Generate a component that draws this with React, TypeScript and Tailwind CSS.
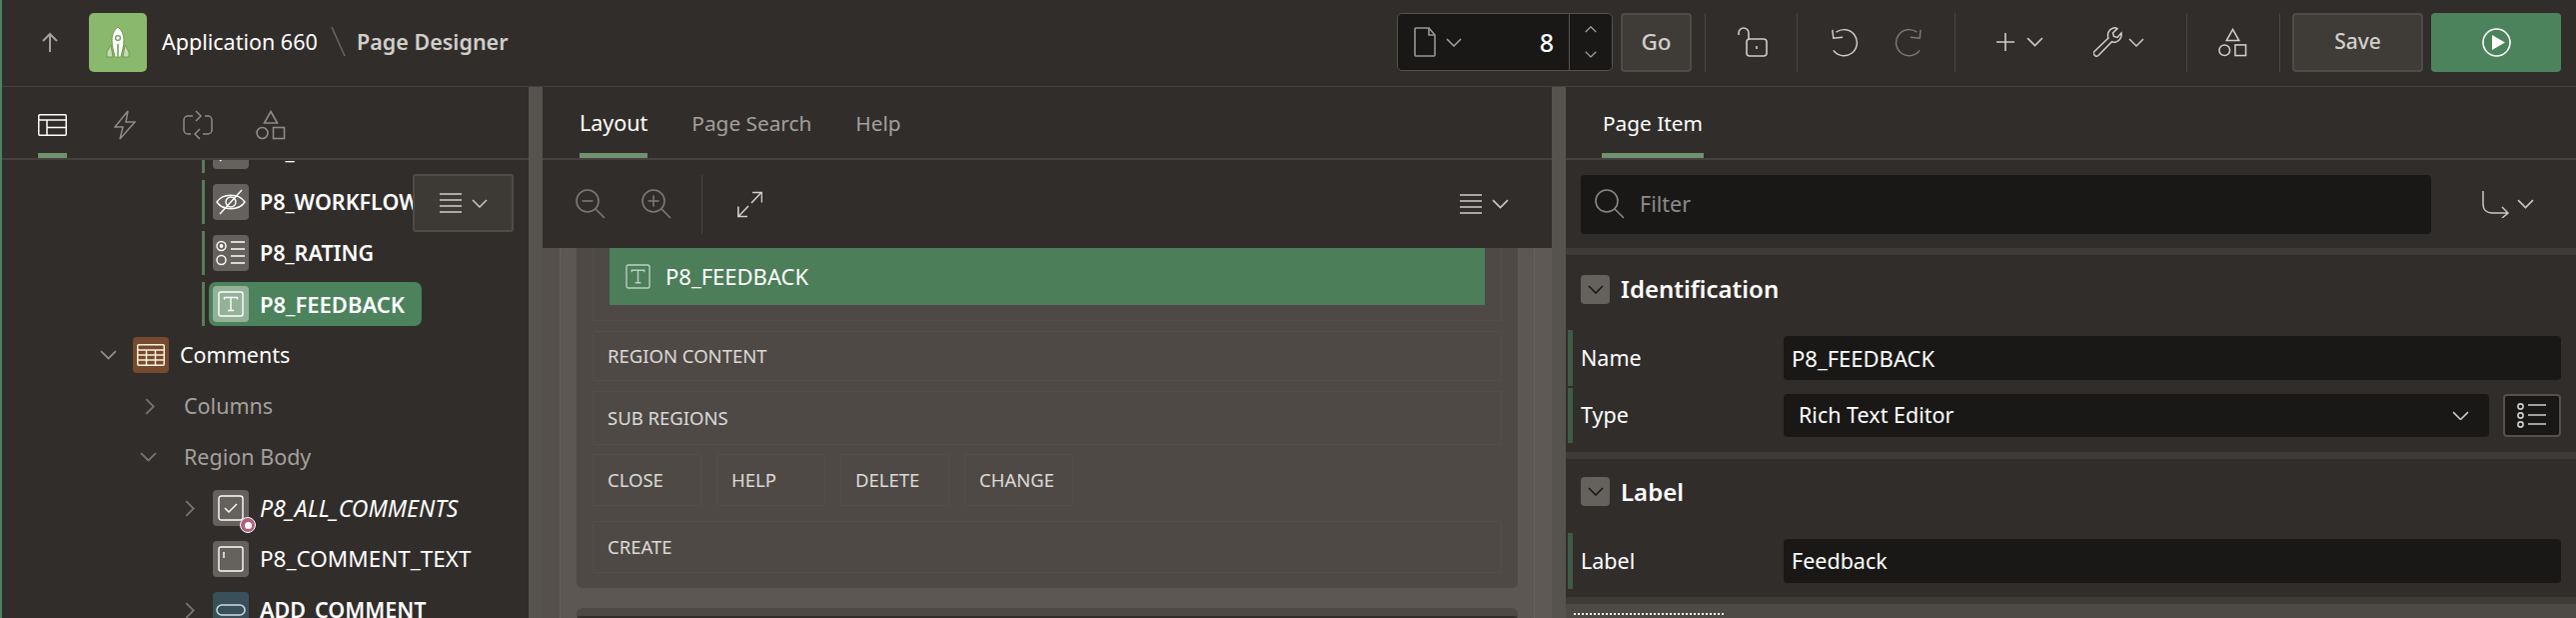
import React from "react";

const Chev = ({ w = 16, dir = "down", c = "#c9c7c5", sw = 1.5, className = "" }: { w?: number; dir?: string; c?: string; sw?: number; className?: string }) => {
  const paths: Record<string, string> = { down: "M1 1l7 7 7-7", up: "M1 8l7-7 7 7" };
  if (dir === "right")
    return (
      <svg width={w} height={w * 1.7} viewBox="0 0 9 16" fill="none" className={`shrink-0 ${className}`}>
        <path d="M1 1l7 7-7 7" stroke={c} strokeWidth={sw} />
      </svg>
    );
  return (
    <svg width={w} height={(w * 9) / 16} viewBox="0 0 16 9" fill="none" className={`shrink-0 ${className}`}>
      <path d={paths[dir]} stroke={c} strokeWidth={sw} />
    </svg>
  );
};

const Shapes = ({ s = 30, c = "#c4c2c0" }: { s?: number; c?: string }) => (
  <svg width={s} height={s} viewBox="0 0 30 30" fill="none" stroke={c} strokeWidth="1.6" className="shrink-0">
    <path d="M15 1.5l6.5 11.5h-13z" />
    <circle cx="6.5" cy="23" r="5.5" />
    <rect x="17.5" y="17.5" width="11" height="11" />
  </svg>
);

const Menu = () => (
  <svg width="22" height="20" viewBox="0 0 22 20" stroke="#d0cecc" strokeWidth="1.6" className="shrink-0">
    <path d="M0 1h22M0 7h22M0 13h22M0 19h22" />
  </svg>
);

const Mag = ({ mode, c = "#7d7975" }: { mode: "minus" | "plus" | "none"; c?: string }) => (
  <svg width="30" height="30" viewBox="0 0 30 30" fill="none" stroke={c} strokeWidth="1.6" className="shrink-0">
    <circle cx="12" cy="12" r="11" />
    <path d="M20 20l9 9" />
    {mode !== "none" && <path d="M6.5 12h11" />}
    {mode === "plus" && <path d="M12 6.5v11" />}
  </svg>
);

const Vsep = ({ className = "" }: { className?: string }) => <div className={`h-[59px] w-px shrink-0 bg-[#4a4643] ${className}`} />;

const TIcon = ({ s = 26, c = "#ffffff" }: { s?: number; c?: string }) => (
  <svg width={s} height={s} viewBox="0 0 26 26" fill="none" stroke={c} strokeWidth="1.4" className="shrink-0">
    <rect x="1" y="1" width="24" height="24" rx="2" />
    <path d="M6.5 8.5V6.5h13v2M13 6.5v13M10 19.5h6" />
  </svg>
);

const IconBox = ({ bg = "bg-[#65615d]", children }: { bg?: string; children: React.ReactNode }) => (
  <div className={`relative flex h-[36px] w-[36px] shrink-0 items-center justify-center rounded-[4px] ${bg}`}>{children}</div>
);

const Bar = () => <div className="h-[44px] w-[3px] shrink-0 bg-[#5a7a5c]" />;

const ItemRow = ({ icon, text }: { icon: React.ReactNode; text: string }) => (
  <div className="flex h-[51px] items-center pl-[200px]">
    <Bar />
    <div className="ml-[8px] flex items-center">
      {icon}
      <span className="ml-[11px] whitespace-nowrap text-[21.5px] font-semibold text-white">{text}</span>
    </div>
  </div>
);

const DotBox = ({ className = "", children }: { className?: string; children: React.ReactNode }) => (
  <div className={`flex items-center rounded-[3px] border border-dotted border-[#5a5551] pl-[14px] text-[18.5px] text-[#dcdad8] ${className}`}>{children}</div>
);

const Field = ({ label, value }: { label: string; value: string }) => (
  <div className="flex h-[56px] items-center pl-[2px]">
    <div className="h-[56px] w-[5px] shrink-0 bg-[#3f5a47]" />
    <span className="ml-[8px] w-[203px] text-[21.5px] text-white">{label}</span>
    <div className="flex h-[44px] w-[778px] items-center rounded-[4px] bg-[#191816] pl-[8px] text-[21.5px] text-white">{value}</div>
  </div>
);

export default function App() {
  return (
    <div className="flex h-[618px] w-[2578px] flex-col overflow-hidden border-l-2 border-[#4c825c] bg-[#312d2a] font-['Noto_Sans','Open_Sans',sans-serif]">
      {/* Header */}
      <header className="flex h-[87px] shrink-0 items-center border-b border-[#45413e] pb-[2px]">
        <svg width="18" height="20" viewBox="0 0 18 20" fill="none" stroke="#a3a09d" strokeWidth="2" className="ml-[39px] shrink-0">
          <path d="M9 20V2M2 9l7-7 7 7" />
        </svg>
        <div className="ml-[30px] flex h-[59px] w-[58px] shrink-0 items-center justify-center rounded-[5px] bg-[#8ab86c]">
          <svg width="24" height="31" viewBox="0 0 24 31" className="mt-[1px]">
            <path d="M5 18L1 25v5h6zM19 18l4 7v5h-6z" fill="#c6dcb6" stroke="#6f9a55" strokeWidth="1" />
            <path d="M12 0c4 3 6 8 6 13 0 6-2 12-3 17H9C8 25 6 19 6 13 6 8 8 3 12 0z" fill="#ffffff" stroke="#6f9a55" strokeWidth="1" />
            <circle cx="12" cy="11" r="2.4" fill="#ffffff" stroke="#6f9a55" strokeWidth="1.3" />
            <path d="M12 17v13" stroke="#8ab86c" strokeWidth="2" />
          </svg>
        </div>
        <span className="ml-[15px] w-[155px] shrink-0 whitespace-nowrap text-[21.5px] text-white">Application 660</span>
        <svg width="15" height="30" viewBox="0 0 15 30" className="ml-[14px] shrink-0"><path d="M1 0l13 29" stroke="#6b6763" strokeWidth="1.5" /></svg>
        <span className="ml-[11px] w-[149px] shrink-0 whitespace-nowrap text-[21.5px] font-semibold text-[#d0cecc]">Page Designer</span>

        <div className="ml-[892px] flex h-[58px] w-[216px] shrink-0 items-center rounded-[5px] border border-[#55514d] bg-[#191816]">
          <svg width="22" height="30" viewBox="0 0 22 30" fill="none" stroke="#9a9794" strokeWidth="1.6" className="ml-[16px] shrink-0">
            <path d="M1 2a1 1 0 011-1h13l6 7v20a1 1 0 01-1 1H2a1 1 0 01-1-1z" />
            <path d="M15 1v7h6" />
          </svg>
          <Chev w={16} c="#a5a29f" className="ml-[10px]" />
          <span className="ml-auto mr-[15px] text-[25px] font-medium leading-none text-white">8</span>
          <div className="flex h-full w-[43px] shrink-0 flex-col items-center justify-between border-l border-[#55514d] py-[12px]">
            <Chev w={12} dir="up" c="#a5a29f" sw={1.6} />
            <Chev w={12} c="#a5a29f" sw={1.6} />
          </div>
        </div>
        <button className="ml-[8px] h-[59px] w-[71px] shrink-0 rounded-[4px] border-2 border-[#4f4c48] bg-[#3f3b37] text-[22.5px] font-medium text-[#d0cecc]">Go</button>
        <Vsep className="ml-[13px]" />
        <svg width="30" height="30" viewBox="0 0 30 30" fill="none" stroke="#d0cecc" strokeWidth="1.6" className="ml-[32px] shrink-0">
          <rect x="9" y="12" width="20" height="17" rx="3" />
          <path d="M1 8V6a5 5 0 0110 0v6" />
          <path d="M19 19v3" />
        </svg>
        <Vsep className="ml-[29px]" />
        <svg width="28" height="30" viewBox="0 0 30 30" fill="none" stroke="#d0cecc" strokeWidth="1.6" className="ml-[33px] shrink-0">
          <path d="M6 4.5A14 14 0 1 1 3 24" />
          <path d="M2 2l1 9 10-1" />
        </svg>
        <svg width="28" height="30" viewBox="0 0 30 30" fill="none" stroke="#7d7975" strokeWidth="1.6" className="ml-[36px] shrink-0">
          <path d="M24 4.5A14 14 0 1 0 27 24" />
          <path d="M28 2l-1 9-10-1" />
        </svg>
        <Vsep className="ml-[32px]" />
        <svg width="18" height="18" viewBox="0 0 18 18" stroke="#d0cecc" strokeWidth="1.6" className="ml-[41px] shrink-0"><path d="M9 0v18M0 9h18" /></svg>
        <Chev w={17} className="ml-[12px]" />
        <svg width="29" height="30" viewBox="0 0 29 30" fill="none" stroke="#d0cecc" strokeWidth="1.5" className="ml-[50px] shrink-0">
          <path d="M1.5 24L15 11c-1.500-4 .5-9 5-10 1.500-.3 3 0 4 .6L19.500 6l1 3.500 3.500 1 4-4.500c.6 4-1.500 8-5.500 9-1.500.3-3 .2-4-.3L5 28.500a2.600 2.600 0 01-3.500-4.500z" />
        </svg>
        <Chev w={16} className="ml-[6px]" />
        <Vsep className="ml-[42px]" />
        <div className="ml-[31px]"><Shapes s={29} c="#d0cecc" /></div>
        <Vsep className="ml-[32px]" />
        <button className="ml-[12px] h-[59px] w-[131px] shrink-0 rounded-[4px] border-2 border-[#4f4c48] bg-[#3f3b37] text-[21px] font-medium text-[#d0cecc]">Save</button>
        <button className="ml-[8px] flex h-[59px] w-[130px] shrink-0 items-center justify-center rounded-[4px] bg-[#4c825c]">
          <svg width="29" height="29" viewBox="0 0 29 29" fill="none">
            <circle cx="14.500" cy="14.500" r="13.500" stroke="#ffffff" strokeWidth="1.6" />
            <path d="M10 7l13 7.500-13 7.500z" fill="#ffffff" />
          </svg>
        </button>
      </header>

      <div className="flex min-h-0 flex-1">
        {/* Left panel */}
        <aside className="relative flex w-[527px] shrink-0 flex-col overflow-hidden">
          <div className="flex h-[73px] shrink-0 items-center border-b-2 border-[#45413e] pl-[36px]">
            <div className="relative flex h-[71px] items-center pt-[4px]">
              <svg width="29" height="22" viewBox="0 0 29 22" fill="none" stroke="#ffffff" strokeWidth="1.5" className="shrink-0">
                <rect x=".75" y=".75" width="27.500" height="20.500" rx="1" />
                <path d="M1 6h27M9 6v15M9 13.500h19" />
              </svg>
              <div className="absolute bottom-0 left-0 h-[5px] w-[29px] bg-[#6f926e]" />
            </div>
            <svg width="22" height="30" viewBox="0 0 22 30" fill="none" stroke="#8e8b88" strokeWidth="1.5" className="ml-[47px] mt-[4px] shrink-0">
              <path d="M14 1L1 17h8L6 29l15-17h-9z" />
            </svg>
            <svg width="30" height="30" viewBox="0 0 30 30" fill="none" stroke="#8e8b88" strokeWidth="1.5" className="ml-[47px] mt-[4px] shrink-0">
              <path d="M10 6H5a4 4 0 00-4 4v10a4 4 0 004 4h3M20 24h5a4 4 0 004-4V10a4 4 0 00-4-4h-3" />
              <path d="M13 1l5 5-5 5M17 19l-5 5 5 5" />
            </svg>
            <div className="ml-[43px] mt-[4px]"><Shapes s={30} c="#8e8b88" /></div>
          </div>
          <div className="relative min-h-0 flex-1 overflow-hidden">
            <div className="-mt-[34.5px]">
              <ItemRow text="P8_ID" icon={
                <IconBox><svg width="28" height="22" viewBox="0 0 28 22" fill="none" stroke="#fff" strokeWidth="1.4"><path d="M1 11c6-9 20-9 26 0-6 9-20 9-26 0zM3 21L25 1" /></svg></IconBox>
              } />
              <ItemRow text="P8_WORKFLOW_ID" icon={
                <IconBox><svg width="30" height="26" viewBox="0 0 30 26" fill="none" stroke="#fff" strokeWidth="1.400"><path d="M1 13c6-9 22-9 28 0-6 9-22 9-28 0z" /><circle cx="15" cy="13" r="5" /><path d="M4 25L26 1" /></svg></IconBox>
              } />
              <ItemRow text="P8_RATING" icon={
                <IconBox><svg width="30" height="26" viewBox="0 0 30 26" fill="none" stroke="#fff" strokeWidth="1.400"><circle cx="5.500" cy="6" r="4.500" /><circle cx="5.500" cy="6" r="1.200" fill="#fff" /><circle cx="5.500" cy="20" r="4.500" /><path d="M15 2h14M15 9h14M15 16h14M15 23h14" /></svg></IconBox>
              } />
              <div className="flex h-[51px] items-center pl-[200px]">
                <Bar />
                <div className="ml-[4px] flex h-[44px] w-[213px] items-center rounded-[7px] bg-[#4c825c] pl-[4px]">
                  <IconBox bg="bg-[#94b298]"><TIcon s={26} /></IconBox>
                  <span className="ml-[11px] whitespace-nowrap text-[22px] font-semibold text-white">P8_FEEDBACK</span>
                </div>
              </div>
              <div className="flex h-[51px] items-center pl-[98px]">
                <Chev w={17} c="#8e8b88" sw={1.7} />
                <div className="ml-[16px]">
                  <IconBox bg="bg-[#754a2e]">
                    <svg width="28" height="22" viewBox="0 0 28 22" fill="none" stroke="#fff1dc" strokeWidth="1.500"><rect x=".75" y=".75" width="26.500" height="20.500" rx="1" /><path d="M1 6h26M1 11h26M1 16h26M9.500 6v15M18.500 6v15" /></svg>
                  </IconBox>
                </div>
                <span className="ml-[11px] whitespace-nowrap text-[21.5px] text-white">Comments</span>
              </div>
              <div className="flex h-[51px] items-center pl-[143px]">
                <Chev w={10} dir="right" c="#77736f" sw={1.7} />
                <span className="ml-[29px] whitespace-nowrap text-[21.5px] text-[#a3a09d]">Columns</span>
              </div>
              <div className="flex h-[51px] items-center pl-[138px]">
                <Chev w={17} c="#77736f" sw={1.7} />
                <span className="ml-[27px] whitespace-nowrap text-[21.5px] text-[#a3a09d]">Region Body</span>
              </div>
              <div className="flex h-[51px] items-center pl-[183px]">
                <Chev w={10} dir="right" c="#77736f" sw={1.7} />
                <div className="relative ml-[18px]">
                  <IconBox>
                    <svg width="26" height="26" viewBox="0 0 26 26" fill="none" stroke="#fff" strokeWidth="1.400"><rect x="1" y="1" width="24" height="24" rx="2.500" /><path d="M7 13l4 4 8-8" /></svg>
                  </IconBox>
                  <div className="absolute -bottom-[7px] -right-[7px] flex h-[16px] w-[16px] items-center justify-center rounded-full border border-white bg-[#b0607f]">
                    <div className="h-[7px] w-[7px] rounded-full bg-white" />
                  </div>
                </div>
                <span className="ml-[11px] whitespace-nowrap text-[23px] italic text-white">P8_ALL_COMMENTS</span>
              </div>
              <div className="flex h-[51px] items-center pl-[211px]">
                <IconBox>
                  <svg width="26" height="26" viewBox="0 0 26 26" fill="none" stroke="#fff" strokeWidth="1.400"><rect x="1" y="1" width="24" height="24" rx="2" /><path d="M6 6v6" /></svg>
                </IconBox>
                <span className="ml-[11px] whitespace-nowrap text-[22.5px] text-white">P8_COMMENT_TEXT</span>
              </div>
              <div className="flex h-[51px] items-center pl-[183px]">
                <Chev w={10} dir="right" c="#77736f" sw={1.7} />
                <div className="ml-[18px]">
                  <IconBox bg="bg-[#38505a]">
                    <svg width="30" height="12" viewBox="0 0 30 12" fill="none" stroke="#cfdde2" strokeWidth="1.500"><rect x="1" y="1" width="28" height="10" rx="5" /></svg>
                  </IconBox>
                </div>
                <span className="ml-[11px] whitespace-nowrap text-[21.5px] font-semibold text-white">ADD_COMMENT</span>
              </div>
            </div>
            <div className="absolute left-[411px] top-[14px] flex h-[58px] w-[101px] items-center justify-center gap-[10px] rounded-[3px] border-2 border-[#4f4c48] bg-[#3d3935]">
              <Menu />
              <Chev w={16} />
            </div>
          </div>
        </aside>

        <div className="w-[14px] shrink-0 bg-[#56524e]" />

        {/* Center */}
        <main className="flex w-[1010px] shrink-0 flex-col">
          <div className="flex h-[73px] shrink-0 items-center border-b-2 border-[#45413e] pl-[37px]">
            <div className="relative flex h-[71px] items-center pt-[2px] text-[21.5px]">
              <span className="text-white">Layout</span>
              <div className="absolute bottom-0 left-0 h-[5px] w-full bg-[#6f926e]" />
            </div>
            <span className="ml-[44px] pt-[2px] text-[20.8px] text-[#a3a09d]">Page Search</span>
            <span className="ml-[44px] pt-[2px] text-[20.8px] text-[#a3a09d]">Help</span>
          </div>
          <div className="flex h-[88px] shrink-0 items-center pl-[33px]">
            <Mag mode="minus" />
            <div className="ml-[36px]"><Mag mode="plus" /></div>
            <div className="ml-[30px]"><Vsep /></div>
            <svg width="25" height="27" viewBox="0 0 25 27" fill="none" stroke="#cfcdcb" strokeWidth="1.600" className="ml-[35px] shrink-0">
              <path d="M14 12L24 1.500M15 1.500h9.500v10M11 15L1 25.500M10 25.500H.8v-10" />
            </svg>
            <div className="ml-auto mr-[43px] flex items-center gap-[10px]">
              <Menu />
              <Chev w={17} />
            </div>
          </div>
          <div className="flex min-h-0 flex-1 overflow-hidden bg-[#5c5753]">
            <div className="w-[34px] shrink-0 border-l-[17px] border-[#55504c]">
              <div className="h-full w-px border-l border-dotted border-[#6b6662]" />
            </div>
            <div className="flex w-[942px] shrink-0 flex-col">
              <div className="h-[340px] shrink-0 rounded-b-[6px] bg-[#4e4945] px-[16px]">
                <div className="h-[73px] rounded-b-[3px] border border-t-0 border-dotted border-[#5a5551] px-[16px]">
                  <div className="flex h-[57px] items-center bg-[#4c7e59] pl-[16px] text-[22px] text-white">
                    <TIcon s={25} c="#bcd0c1" />
                    <span className="ml-[15px]">P8_FEEDBACK</span>
                  </div>
                </div>
                <DotBox className="mt-[10px] h-[50px]">REGION CONTENT</DotBox>
                <DotBox className="mt-[10px] h-[54px]">SUB REGIONS</DotBox>
                <div className="mt-[9px] flex gap-[15px]">
                  {["CLOSE", "HELP", "DELETE", "CHANGE"].map((t) => (
                    <DotBox key={t} className="h-[52px] w-[109px]">{t}</DotBox>
                  ))}
                </div>
                <DotBox className="mt-[15px] h-[52px]">CREATE</DotBox>
              </div>
              <div className="mt-[20px] flex-1 rounded-t-[6px] bg-[#4e4945] pt-[8px]">
                <div className="h-[4px] rounded-t-[4px] bg-[#312d2a]" />
              </div>
            </div>
            <div className="w-[34px] shrink-0 border-r-[18px] border-[#5e5955]">
              <div className="ml-[16px] h-full w-px border-l border-dotted border-[#6b6662]" />
            </div>
          </div>
        </main>

        <div className="w-[14px] shrink-0 bg-[#56524e]" />

        {/* Right */}
        <section className="flex min-w-0 flex-1 flex-col">
          <div className="flex h-[73px] shrink-0 items-center border-b-2 border-[#45413e] pl-[36px] text-[20.8px]">
            <div className="relative flex h-[71px] items-center px-[1px] pt-[2px]">
              <span className="text-white">Page Item</span>
              <div className="absolute bottom-0 left-0 h-[5px] w-full bg-[#6f926e]" />
            </div>
          </div>
          <div className="flex h-[88px] shrink-0 items-center pl-[15px]">
            <div className="flex h-[59px] w-[851px] items-center rounded-[4px] bg-[#191816] pl-[14px]">
              <Mag mode="none" c="#8a8683" />
              <span className="ml-[15px] text-[21.5px] text-[#8e8b88]">Filter</span>
            </div>
            <svg width="27" height="28" viewBox="0 0 27 28" fill="none" stroke="#c9c7c5" strokeWidth="1.500" className="ml-[51px] shrink-0">
              <path d="M1 1v13c0 6 4 9 9 9h16M20 17l6 6-6 5" />
            </svg>
            <Chev w={17} className="ml-[8px]" />
          </div>
          <div className="h-[7px] shrink-0 bg-[#3e3a36]" />
          <div className="flex h-[68px] shrink-0 items-center pl-[15px]">
            <div className="flex h-[29px] w-[29px] items-center justify-center rounded-[4px] bg-[#65615d]"><Chev w={16} c="#191816" sw={1.600} /></div>
            <span className="ml-[11px] text-[24px] font-semibold leading-none text-white">Identification</span>
          </div>
          <div className="mt-[7px] flex flex-col gap-[2px]">
            <div className="flex h-[56px] items-center pl-[2px]">
              <div className="h-[56px] w-[5px] shrink-0 bg-[#3f5a47]" />
              <span className="ml-[8px] w-[203px] text-[21.5px] text-white">Name</span>
              <div className="flex h-[44px] w-[778px] items-center rounded-[4px] bg-[#191816] pl-[8px] text-[22px] text-white">P8_FEEDBACK</div>
            </div>
            <div className="flex h-[55px] items-center pl-[2px]">
              <div className="h-[55px] w-[5px] shrink-0 bg-[#3f5a47]" />
              <span className="ml-[8px] w-[203px] text-[21.5px] text-white">Type</span>
              <div className="flex h-[43px] w-[706px] items-center rounded-[4px] bg-[#191816] pl-[15px] text-[21.5px] text-white">
                Rich Text Editor
                <Chev w={17} className="ml-auto mr-[20px]" />
              </div>
              <div className="ml-[14px] flex h-[43px] w-[58px] items-center justify-center rounded-[4px] border-2 border-[#55514d] bg-[#191816]">
                <svg width="30" height="25" viewBox="0 0 30 25" fill="none" stroke="#cfcdcb" strokeWidth="1.600"><circle cx="3.500" cy="3.500" r="2.600" /><circle cx="3.500" cy="12.500" r="2.600" /><circle cx="3.500" cy="21.500" r="2.600" /><path d="M11 2h18M11 12h18M11 21h18" /></svg>
              </div>
            </div>
          </div>
          <div className="mt-[9px] h-[7px] shrink-0 bg-[#3e3a36]" />
          <div className="flex h-[65px] shrink-0 items-center pl-[15px]">
            <div className="flex h-[29px] w-[29px] items-center justify-center rounded-[4px] bg-[#65615d]"><Chev w={16} c="#191816" sw={1.600} /></div>
            <span className="ml-[11px] text-[24px] font-semibold leading-none text-white">Label</span>
          </div>
          <div className="mt-[9px] mb-[1px]"><Field label="Label" value="Feedback" /></div>
          <div className="mt-[7px] h-[7px] shrink-0 bg-[#3e3a36]" />
          <div className="flex-1 bg-[#4d4a45] pl-[8px] pt-[9px]">
            <div className="h-[2px] w-[150px] border-t-2 border-dotted border-white" />
          </div>
        </section>
      </div>
    </div>
  );
}
